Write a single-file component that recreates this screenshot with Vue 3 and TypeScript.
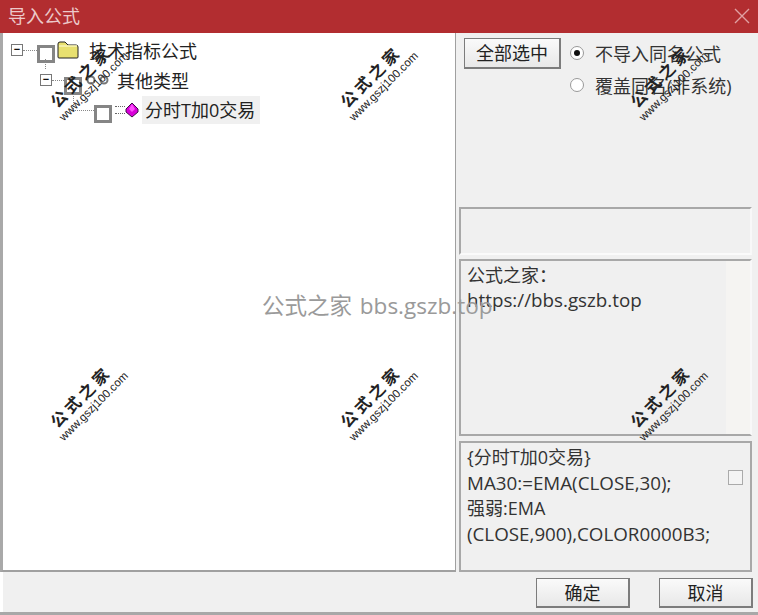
<script setup lang="ts">
const marks = [
  { x: 48, y: 48 }, { x: 338, y: 48 }, { x: 628, y: 48 },
  { x: 48, y: 368 }, { x: 338, y: 368 }, { x: 628, y: 368 },
]
const markStyle = (m: { x: number; y: number }) => ({ left: `${m.x}px`, top: `${m.y}px` })
</script>

<template>
  <div class="win">
    <header class="title">
      <span>导入公式</span>
      <svg class="close" width="16" height="16" viewBox="0 0 16 16"><path d="M1 1L15 15M15 1L1 15" stroke="#e0a0a2" stroke-width="1.4" fill="none"/></svg>
    </header>
    <div class="body">
      <div class="tree">
        <div class="row r1">
          <span class="exp">−</span><span class="dots"></span><span class="cb c1"></span>
          <svg class="folder" width="22" height="18" viewBox="0 0 22 18"><path d="M1 16V3q0-2 2-2h5l3 3h8q2 0 2 2v10q0 1-1 1H2q-1 0-1-1z" fill="#e8e070" stroke="#222" stroke-width="1"/><path d="M2 5h18" stroke="#f8f4b8" stroke-width="1.5"/></svg>
          <span class="lbl">技术指标公式</span>
        </div>
        <div class="row r2">
          <span class="exp">−</span><span class="dots"></span><span class="cb c2"></span>
          <svg class="gear" width="26" height="14" viewBox="0 0 26 14"><circle cx="6" cy="7" r="3.5" fill="none" stroke="#777" stroke-width="2"/><circle cx="19" cy="7" r="3.5" fill="none" stroke="#777" stroke-width="2"/></svg>
          <span class="lbl">其他类型</span>
        </div>
        <div class="row r3">
          <span class="dots"></span><span class="cb c1"></span>
          <span class="mini"></span>
          <svg class="gem" width="14" height="16" viewBox="0 0 14 16"><path d="M7 1L13 7V10L7 15L1 10V7z" fill="#d800d8" stroke="#40104a" stroke-width="1"/><path d="M7 2L10 7L7 10L4 7z" fill="#ff50ff"/></svg>
          <span class="lbl sel">分时T加0交易</span>
        </div>
        <span class="vline v1"></span>
        <span class="vline v2"></span>
      </div>
      <div class="side">
        <div class="opts">
          <button class="btn all">全部选中</button>
          <div class="radios">
            <label class="radio"><span class="dot on"></span>不导入同名公式</label>
            <label class="radio"><span class="dot"></span>覆盖同名(非系统)</label>
          </div>
        </div>
        <div class="panel blank"></div>
        <div class="panel info">
          <p>公式之家：</p>
          <p class="latin">https://bbs.gszb.top</p>
        </div>
        <div class="panel code">
          <div class="codetext">
            <p>{分时T加0交易}</p>
            <p class="latin">MA30:=EMA(CLOSE,30);</p>
            <p>强弱:EMA</p>
            <p class="latin">(CLOSE,900),COLOR0000B3;</p>
          </div>
          <span class="tick"></span>
        </div>
      </div>
    </div>
    <footer class="foot">
      <button class="btn ok">确定</button>
      <button class="btn ok">取消</button>
    </footer>
    <div class="stamp">公式之家 bbs.gszb.top</div>
    <div v-for="(m, i) in marks" :key="i" class="mark" :style="markStyle(m)">
      <span class="m1">公式之家</span>
      <span class="m2">www.gszj100.com</span>
    </div>
  </div>
</template>

<style>
html, body { margin: 0; background: #f0f0f0; }
</style>

<style scoped>
.win { position: relative; width: 758px; height: 615px; overflow: hidden; background: #f0f0f0; display: flex; flex-direction: column; font-family: "Open Sans", "Noto Sans CJK SC", sans-serif; color: #333; border-bottom: 3px solid #a8a8a8; box-sizing: border-box; }
p { margin: 0; }
.latin { font-size: 18.8px; }
.title { height: 33px; flex: none; background: #b22d30; color: #ecc9ca; font-size: 18px; line-height: 1; display: flex; align-items: center; justify-content: space-between; padding: 0 8px 2px; box-sizing: border-box; }
.body { height: 539px; flex: none; display: flex; }
.tree { position: relative; width: 456px; flex: none; box-sizing: border-box; background: #fff; border-left: 3px solid #a9a9a9; border-right: 1px solid #a0a0a0; border-bottom: 2px solid #a0a0a0; padding-top: 2px; font-size: 18px; }
.row { display: flex; align-items: center; height: 30px; position: relative; }
.r1 { padding-left: 8px; }
.r2 { padding-left: 37px; }
.r3 { padding-left: 70px; }
.exp { width: 12px; height: 12px; border: 1px solid #777; box-sizing: border-box; font-size: 11px; line-height: 9px; text-align: center; color: #111; background: #fff; flex: none; font-family: "Liberation Sans", sans-serif; font-weight: 700; }
.dots { width: 14px; border-top: 1px dotted #888; flex: none; }
.r2 .dots { width: 12px; }
.r3 .dots { width: 21px; }
.cb { width: 18px; height: 18px; box-sizing: border-box; border: 3px solid #858585; background: #fff; flex: none; }
.c1 { margin-top: 8px; }
.c2 { margin-top: 12px; }
.folder { margin-left: 2px; margin-top: -1px; flex: none; }
.gear { margin-left: 3px; flex: none; }
.r1 .lbl { margin-left: 10px; }
.r2 .lbl { margin-left: 6px; }
.mini { width: 10px; height: 6px; margin-left: 3px; border-top: 1px dotted #666; border-bottom: 1px dotted #666; flex: none; }
.gem { flex: none; }
.lbl { white-space: nowrap; color: #222; }
.sel { background: #f0f0f0; margin-left: 3px; padding: 0; width: 118px; line-height: 28px; height: 28px; padding-left: 3px; box-sizing: border-box; }
.vline { position: absolute; border-left: 1px dotted #888; width: 0; }
.v1 { left: 42px; top: 26px; height: 10px; }
.v2 { left: 70px; top: 60px; height: 16px; }
.side { flex: 1; min-width: 0; display: flex; flex-direction: column; padding-left: 3px; padding-right: 6px; }
.opts { height: 174px; flex: none; display: flex; align-items: flex-start; padding: 5px 0 0 5px; box-sizing: border-box; font-size: 18px; }
.btn { font-family: inherit; font-size: 18px; line-height: 1; color: #222; border: 2px solid #7c7c7c; border-width: 1px 2px 2px 1px; background: linear-gradient(#fafafa, #e8e8e8); padding: 0; }
.all { width: 97px; height: 31px; flex: none; }
.radios { margin-left: 9px; display: flex; flex-direction: column; gap: 8px; padding-top: 3px; }
.radio { display: flex; align-items: center; height: 24px; white-space: nowrap; }
.dot { width: 14px; height: 14px; border-radius: 50%; background: #fff; border: 1px solid #999; box-sizing: border-box; margin-right: 11px; position: relative; flex: none; }
.dot.on::after { content: ""; position: absolute; left: 3px; top: 3px; width: 6px; height: 6px; border-radius: 50%; background: #111; }
.panel { box-sizing: border-box; border-top: 2px solid #a8a8a8; border-left: 2px solid #a8a8a8; border-right: 2px solid #f8f8f8; border-bottom: 2px solid #a8a8a8; background: #f0f0f0; }
.blank { height: 48px; border-bottom-color: #fafafa; }
.info { margin-top: 4px; height: 177px; padding: 2px 6px; font-size: 18px; line-height: 25px; background: linear-gradient(to right, #f0f0f0 265px, #f5f4f2 265px); }
.code { margin-top: 5px; height: 131px; position: relative; padding: 2px 6px; font-size: 18px; line-height: 25.5px; border-right-color: #a8a8a8; }
.codetext { width: 255px; white-space: nowrap; }
.tick { position: absolute; left: 267px; top: 27px; width: 15px; height: 15px; box-sizing: border-box; border: 1px solid #aaa; background: #f4f4f4; }
.foot { flex: 1; display: flex; justify-content: flex-end; gap: 29px; padding: 6px 5px 0 0; box-sizing: border-box; border-left: 3px solid #fff; }
.ok { width: 94px; height: 30px; }
.stamp { position: absolute; left: 262px; top: 290px; font-size: 22.5px; line-height: 32px; word-spacing: 2px; color: #9a9a9a; white-space: nowrap; }
.mark { position: absolute; width: 90px; height: 70px; color: #222; pointer-events: none; font-family: "Noto Sans CJK SC", sans-serif; }
.m1 { position: absolute; left: -7px; top: 20px; font-size: 16px; font-weight: 700; letter-spacing: 3.6px; white-space: nowrap; transform: rotate(-45deg); line-height: 1; }
.m2 { position: absolute; left: 0; top: 33px; font-size: 11.5px; font-family: "Liberation Sans", sans-serif; white-space: nowrap; transform: rotate(-45deg); line-height: 1; }
</style>
